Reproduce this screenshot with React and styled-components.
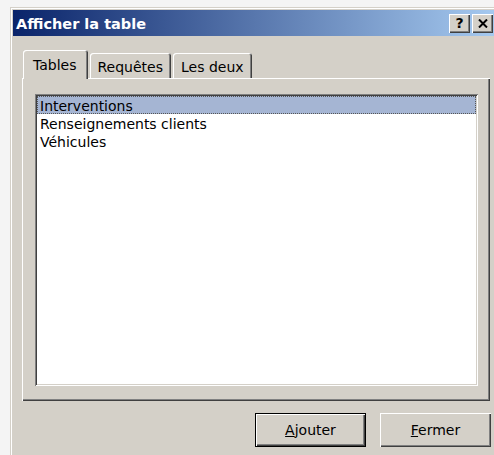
import React, { useState } from 'react'
import styled, { createGlobalStyle } from 'styled-components'

const GlobalStyle = createGlobalStyle`
  html, body {
    margin: 0;
    background: #f4f4f4;
    overflow: hidden;
  }
  body {
    font-family: "DejaVu Sans", Verdana, sans-serif;
    font-size: 14px;
    color: #000;
  }
`

const Page = styled.div`
  padding: 7px 0 0 10px;
`

const Window = styled.div`
  width: 490px;
  height: 460px;
  box-sizing: border-box;
  padding: 3px;
  background: #d4d0c8;
  box-shadow: inset 1px 1px #d4d0c8, inset -1px -1px #404040,
    inset 2px 2px #fff, inset -2px -2px #808080;
`

const TitleBar = styled.div`
  height: 26px;
  display: flex;
  align-items: center;
  padding: 0 4px 0 3px;
  background: linear-gradient(to right, #0a246a, #a6caf0);
`

const Title = styled.div`
  flex: 1;
  color: #fff;
  font-weight: bold;
  font-size: 14.5px;
  padding-top: 1px;
`

const CaptionButtons = styled.div`
  display: flex;
  gap: 2px;
`

const CaptionButton = styled.div`
  width: 21px;
  height: 19px;
  box-sizing: border-box;
  display: flex;
  align-items: center;
  justify-content: center;
  background: #d4d0c8;
  font-weight: bold;
  font-size: 14px;
  box-shadow: inset 1px 1px #fff, inset -1px -1px #404040,
    inset -2px -2px #808080;
`

const Content = styled.div`
  padding: 13px 0 0 9px;
`

const TabRow = styled.div`
  display: flex;
  align-items: flex-end;
  gap: 2px;
  padding-left: 1px;
  height: 29px;
  position: relative;
  z-index: 1;
`

const Tab = styled.div`
  height: ${p => (p.$active ? 29 : 25)}px;
  margin-bottom: ${p => (p.$active ? -1 : 0)}px;
  box-sizing: border-box;
  display: flex;
  align-items: center;
  padding: ${p => (p.$active ? '1px 11px 0 10px' : '3px 8px 0')};
  background: #d4d0c8;
  border-radius: 3px 3px 0 0;
  box-shadow: inset 1px 1px #fff, inset -1px 0 #404040,
    inset -2px 0 #808080;
  cursor: default;
`

const Panel = styled.div`
  width: 468px;
  height: 323px;
  box-sizing: border-box;
  display: flex;
  flex-direction: column;
  padding: 16px 12px 15px 13px;
  box-shadow: inset 1px 1px #fff, inset -1px -1px #404040,
    inset -2px -2px #808080;
`

const ListBox = styled.div`
  flex: 1;
  background: #fff;
  padding: 2px;
  box-shadow: inset 1px 1px #808080, inset -1px -1px #fff,
    inset 2px 2px #404040, inset -2px -2px #d4d0c8;
`

// rows keep an 18px pitch, text sits a little low like the native list
const Item = styled.div`
  height: 18px;
  line-height: 21px;
  padding-left: 3px;
  box-sizing: border-box;
  white-space: nowrap;
  background: ${p => (p.$selected ? '#a5b5d3' : 'transparent')};
  outline: ${p => (p.$selected ? '1px dotted #555' : 'none')};
  outline-offset: -1px;
`

const Footer = styled.div`
  width: 469px;
  display: flex;
  justify-content: flex-end;
  gap: 14px;
  margin-top: 12px;
`

const Button = styled.button`
  width: 111px;
  height: 34px;
  font: inherit;
  color: #000;
  background: #d4d0c8;
  border: ${p => (p.$default ? '1px solid #000' : 'none')};
  padding: 0;
  box-shadow: inset 1px 1px #fff, inset -1px -1px #404040,
    inset -2px -2px #808080;
`

const tabs = ['Tables', 'Requêtes', 'Les deux']
const tables = ['Interventions', 'Renseignements clients', 'Véhicules']

const App = () => {
  const [tab, setTab] = useState(0)
  const [selected, setSelected] = useState(0)

  return (
    <Page>
      <GlobalStyle />
      <Window>
        <TitleBar>
          <Title>Afficher la table</Title>
          <CaptionButtons>
            <CaptionButton>?</CaptionButton>
            <CaptionButton>
              <svg width="10" height="9" viewBox="0 0 10 9">
                <path d="M1 0.5 L9 8.5 M9 0.5 L1 8.5" stroke="#000" strokeWidth="2" />
              </svg>
            </CaptionButton>
          </CaptionButtons>
        </TitleBar>
        <Content>
          <TabRow>
            {tabs.map((t, i) => (
              <Tab key={t} $active={i === tab} onClick={() => setTab(i)}>
                {t}
              </Tab>
            ))}
          </TabRow>
          <Panel>
            <ListBox>
              {tables.map((t, i) => (
                <Item key={t} $selected={i === selected} onClick={() => setSelected(i)}>
                  {t}
                </Item>
              ))}
            </ListBox>
          </Panel>
          <Footer>
            <Button $default><u>A</u>jouter</Button>
            <Button><u>F</u>ermer</Button>
          </Footer>
        </Content>
      </Window>
    </Page>
  )
}

export default App
